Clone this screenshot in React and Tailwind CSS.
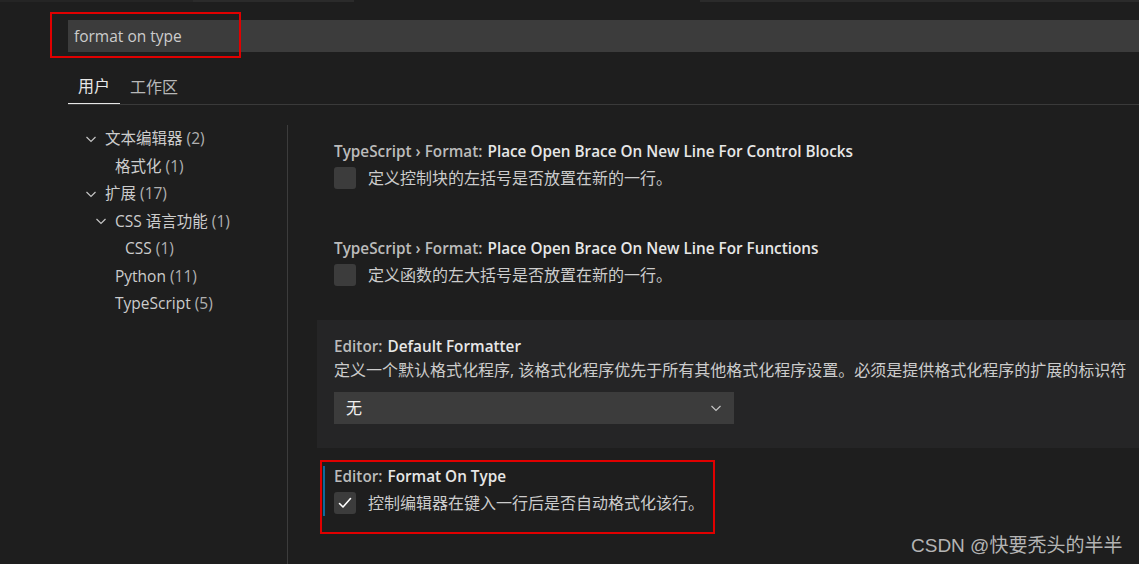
const FONT = { fontFamily: '"Open Sans", "Noto Sans CJK SC", sans-serif' };

function Chevron({ className = "" }) {
  return (
    <svg width="12" height="12" viewBox="0 0 12 12" className={className} fill="none">
      <path d="M1.5 4 L6 8.5 L10.5 4" stroke="#c5c5c5" strokeWidth="1.2" />
    </svg>
  );
}

function Checkbox({ checked }) {
  return (
    <div className="w-[22px] h-[22px] rounded-[3px] bg-[#3c3c3c] flex items-center justify-center shrink-0">
      {checked && (
        <svg width="16" height="16" viewBox="0 0 16 16" fill="none">
          <path d="M2.5 8.5 L6 12 L13.5 3.5" stroke="#ffffff" strokeWidth="1.6" strokeLinecap="round" strokeLinejoin="round" />
        </svg>
      )}
    </div>
  );
}

const tree = [
  { name: "文本编辑器", count: 2, level: 0, open: true },
  { name: "格式化", count: 1, level: 1 },
  { name: "扩展", count: 17, level: 0, open: true },
  { name: "CSS 语言功能", count: 1, level: 1, open: true },
  { name: "CSS", count: 1, level: 2 },
  { name: "Python", count: 11, level: 1 },
  { name: "TypeScript", count: 5, level: 1 },
];

function TreeRow({ item }) {
  const pad = { 0: "pl-[85px]", 1: "pl-[95px]", 2: "pl-[105px]" }[item.level];
  return (
    <div className={`h-[27.5px] flex items-center ${pad}`}>
      <div className="w-[20px] flex items-center">{item.open && <Chevron />}</div>
      <span className="text-[15.5px] text-[#cccccc] whitespace-nowrap">
        {item.name} <span className="text-[#b0b0b0]">({item.count})</span>
      </span>
    </div>
  );
}

function SettingTitle({ prefix, name }) {
  return (
    <div className="h-[20px] flex items-center text-[15.3px] font-semibold whitespace-nowrap">
      <span className="text-[#bbbbbb]">{prefix}</span>
      <span className="text-[#e7e7e7] ml-[5px]">{name}</span>
    </div>
  );
}

function BoolSetting({ desc, checked }) {
  return (
    <div className="flex items-center gap-[12px] mt-[5px]">
      <Checkbox checked={checked} />
      <span className="text-[16px] text-[#cccccc] whitespace-nowrap">{desc}</span>
    </div>
  );
}

export default function App() {
  return (
    <div className="w-[1139px] h-[564px] bg-[#1e1e1e] overflow-hidden relative flex flex-col" style={FONT}>
      <div className="h-[2px] flex shrink-0">
        <div className="w-[193px] bg-[#252525]" />
        <div className="w-[161px] bg-[#2b2b2b]" />
        <div className="w-[346px] bg-[#1e1e1e]" />
        <div className="flex-1 bg-[#2b2b2b]" />
      </div>

      <div className="pl-[68px] pt-[18px] shrink-0">
        <div className="h-[32px] bg-[#3c3c3c] flex items-center pl-[6px] pt-[2px] text-[15.5px] text-[#cccccc]">
          format on type
        </div>
      </div>

      <div className="pl-[68px] mt-[17px] shrink-0">
        <div className="flex border-b border-[#3a3a3a]">
          <div className="h-[35px] w-[52px] flex items-center justify-center text-[16px] text-[#e7e7e7] border-b border-[#e7e7e7] -mb-px">
            用户
          </div>
          <div className="h-[35px] px-[10px] flex items-center text-[16px] text-[#b8b8b8]">工作区</div>
        </div>
      </div>

      <div className="flex flex-1 mt-[20px]">
        <div className="w-[288px] border-r border-[#3c3c3c] shrink-0">
          {tree.map((item) => (
            <TreeRow key={item.name + item.level} item={item} />
          ))}
        </div>

        <div className="flex-1 pl-[29px] flex flex-col">
          <div className="h-[97px] pl-[17px] pt-[16px]">
            <SettingTitle prefix="TypeScript › Format:" name="Place Open Brace On New Line For Control Blocks" />
            <BoolSetting desc="定义控制块的左括号是否放置在新的一行。" />
          </div>
          <div className="h-[98px] pl-[17px] pt-[16px]">
            <SettingTitle prefix="TypeScript › Format:" name="Place Open Brace On New Line For Functions" />
            <BoolSetting desc="定义函数的左大括号是否放置在新的一行。" />
          </div>
          <div className="h-[128px] bg-[#252526] pl-[17px] pt-[16px] overflow-hidden">
            <SettingTitle prefix="Editor:" name="Default Formatter" />
            <div className="h-[28px] flex items-center text-[16px] text-[#cccccc] whitespace-nowrap">
              定义一个默认格式化程序, 该格式化程序优先于所有其他格式化程序设置。必须是提供格式化程序的扩展的标识符
            </div>
            <div className="mt-[8px] w-[400px] h-[32px] bg-[#3c3c3c] flex items-center justify-between pl-[12px] pr-[12px] text-[16px] text-[#f0f0f0]">
              <span>无</span>
              <Chevron />
            </div>
          </div>
          <div className="pt-[18px]">
            <div className="ml-[6px] border-l-2 border-[#0e6a9c] pl-[9px] h-[50px]">
              <SettingTitle prefix="Editor:" name="Format On Type" />
              <BoolSetting desc="控制编辑器在键入一行后是否自动格式化该行。" checked />
            </div>
          </div>
        </div>
      </div>

      <div className="absolute left-[50px] top-[12px] w-[191px] h-[46px] border-2 border-[#e00000]" />
      <div className="absolute left-[320px] top-[460px] w-[395px] h-[74px] border-2 border-[#e00000]" />
      <div
        className="absolute left-[911px] top-[532px] text-[19px] text-[#b4b4b4] whitespace-nowrap"
        style={{ fontFamily: '"Liberation Sans", "Noto Sans CJK SC", sans-serif' }}
      >
        CSDN @快要秃头的半半
      </div>
    </div>
  );
}
